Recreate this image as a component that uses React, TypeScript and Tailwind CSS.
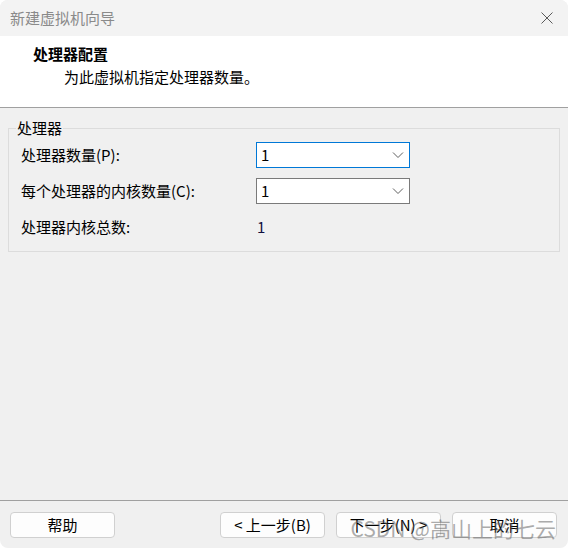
import React from 'react';

const font = { fontFamily: '"Noto Sans CJK SC", "Noto Sans", sans-serif' };

type ComboProps = {
    value: string;
    focused?: boolean;
};

function Combo({ value, focused }: ComboProps) {
    return (
        <div
            className={
                focused
                    ? 'flex h-[26px] w-[154px] items-center justify-between border border-[#0078d7] bg-white pl-[4px] pr-[4px]'
                    : 'flex h-[26px] w-[154px] items-center justify-between border border-[#7a7a7a] bg-white pl-[4px] pr-[4px]'
            }
        >
            <span className="text-[15px] leading-[20px] text-black">{value}</span>
            <svg width="12" height="8" viewBox="0 0 12 8" className="mr-[1px]">
                <path d="M1 1.5 L6 6.5 L11 1.5" fill="none" stroke="#606060" strokeWidth="1" />
            </svg>
        </div>
    );
}

function DlgButton({ children }: { children: React.ReactNode }) {
    return (
        <button className="h-[26px] w-[105px] rounded-[4px] border border-[#d0d0d0] bg-[#fdfdfd] text-[15px] leading-[20px] text-black">
            {children}
        </button>
    );
}

export default function App() {
    return (
        <div className="relative flex h-[548px] w-[568px] flex-col overflow-hidden rounded-[8px] bg-[#f0f0f0]" style={font}>
            {/* title bar */}
            <div className="flex h-[36px] shrink-0 items-center justify-between bg-[#f3f3f3] pl-[10px] pr-[15px]">
                <span className="text-[15px] leading-[20px] text-[#8a8a8a]">新建虚拟机向导</span>
                <svg width="12" height="12" viewBox="0 0 12 12">
                    <path d="M0.5 0.5 L11.5 11.5 M11.5 0.5 L0.5 11.5" stroke="#5a5a5a" strokeWidth="1" />
                </svg>
            </div>

            {/* header */}
            <div className="flex h-[72px] shrink-0 flex-col border-b border-[#a0a0a0] bg-white pt-[8px]">
                <div className="pl-[33px] text-[15px] font-bold leading-[20px] text-black">处理器配置</div>
                <div className="mt-[3px] pl-[64px] text-[15px] leading-[20px] text-black">为此虚拟机指定处理器数量。</div>
            </div>

            {/* body */}
            <div className="flex-1 px-[8px] pt-[10px]">
                <fieldset className="border border-[#dcdcdc] px-[12px] pb-[11px] pt-[4px]">
                    <legend className="ml-[-5px] px-[1px] text-[15px] leading-[20px] text-black">处理器</legend>
                    <div className="flex flex-col gap-[10px]">
                        <div className="flex h-[26px] items-center">
                            <span className="w-[235px] text-[15px] leading-[20px] text-black">处理器数量(P):</span>
                            <Combo value="1" focused />
                        </div>
                        <div className="flex h-[26px] items-center">
                            <span className="w-[235px] text-[15px] leading-[20px] text-black">每个处理器的内核数量(C):</span>
                            <Combo value="1" />
                        </div>
                        <div className="flex h-[26px] items-center">
                            <span className="w-[236px] text-[15px] leading-[20px] text-black">处理器内核总数:</span>
                            <span className="text-[15px] leading-[20px] text-[#101040]">1</span>
                        </div>
                    </div>
                </fieldset>
            </div>

            {/* footer */}
            <div className="flex h-[48px] shrink-0 items-start border-t border-[#a0a0a0] pl-[10px] pr-[11px] pt-[11px]">
                <DlgButton>帮助</DlgButton>
                <div className="ml-auto flex gap-[11px]">
                    <DlgButton>&lt; 上一步(B)</DlgButton>
                    <DlgButton>下一步(N) &gt;</DlgButton>
                    <DlgButton>取消</DlgButton>
                </div>
            </div>

            {/* watermark */}
            <div className="pointer-events-none absolute bottom-[5px] right-[12px] text-[21px] leading-[30px] text-[rgba(90,90,90,0.5)]">
                CSDN @高山上的七云
            </div>
        </div>
    );
}
